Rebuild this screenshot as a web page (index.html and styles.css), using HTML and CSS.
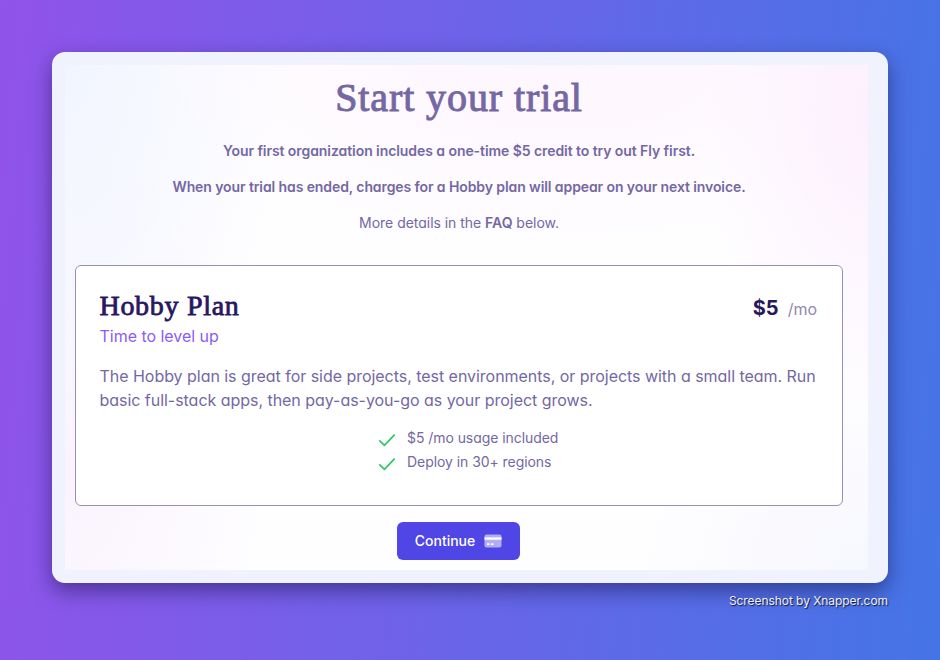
FILE: index.html
```html
<!DOCTYPE html>
<html lang="en">
<head>
<meta charset="utf-8">
<title>Start your trial</title>
<link rel="stylesheet" href="styles.css">
</head>
<body>
<main class="window">
  <div class="panel">
    <header class="intro">
      <h1 class="title">Start your trial</h1>
      <p class="strong credit">Your first organization includes a one-time $5 credit to try out Fly first.</p>
      <p class="strong charges">When your trial has ended, charges for a Hobby plan will appear on your next invoice.</p>
      <p class="details">More details in the <b>FAQ</b> below.</p>
    </header>
    <section class="plan">
      <div class="plan-head">
        <h2 class="plan-name">Hobby Plan</h2>
        <div class="price"><b>$5</b><span>/mo</span></div>
      </div>
      <p class="tagline">Time to level up</p>
      <p class="description">The Hobby plan is great for side projects, test environments, or projects with a small team. Run basic full-stack apps, then pay-as-you-go as your project grows.</p>
      <ul class="features">
        <li><svg class="check" viewBox="0 0 18 18"><path d="M1.8 9.8 6.4 14.4 16.2 4.2"/></svg><span>$5 /mo usage included</span></li>
        <li><svg class="check" viewBox="0 0 18 18"><path d="M1.8 9.8 6.4 14.4 16.2 4.2"/></svg><span>Deploy in 30+ regions</span></li>
      </ul>
    </section>
    <button class="continue" type="button">Continue
      <svg class="card-icon" viewBox="0 0 18 14"><rect x=".5" y=".5" width="17" height="13" rx="2" fill="#b3adf5"/><path fill="#fff" d="M.5 3.4h17v2.3H.5z"/><path fill="#fff" d="M3 9.2h2.5v1.8H3zM7 9.2h2.5v1.8H7z"/></svg>
    </button>
  </div>
</main>
<footer class="credit-line">Screenshot by Xnapper.com</footer>
</body>
</html>
```
FILE: styles.css
```css
* { box-sizing: border-box; }
body {
  margin: 0;
  width: 940px;
  height: 660px;
  padding: 52px 52px 0;
  overflow: hidden;
  background: linear-gradient(95deg, #9153ea 0%, #4475e6 100%);
  font-family: Inter, "Liberation Sans", sans-serif;
  font-feature-settings: "cv11";
  color: #7468a4;
}
h1, h2, p, ul { margin: 0; padding: 0; }
.window {
  height: 531px;
  padding: 13px 20px 13px 13px;
  border-radius: 13px;
  background: #f0f3fe;
  box-shadow: 0 8px 20px rgba(20, 15, 70, .5);
}
.panel {
  display: flex;
  flex-direction: column;
  align-items: center;
  height: 505px;
  padding: 13px 25px 0 10px;
  background:
    radial-gradient(ellipse 160px 300px at 100% 10%, #fdf0fe 0%, rgba(253, 240, 254, 0) 100%),
    radial-gradient(ellipse 420px 180px at 62% 0, #fef6fe 0%, rgba(254, 246, 254, 0) 100%),
    radial-gradient(ellipse 220px 400px at 0 0, #f1f5ff 0%, rgba(241, 245, 255, 0) 100%),
    radial-gradient(ellipse 200px 330px at 0 80%, #faf3fe 0%, rgba(250, 243, 254, 0) 100%),
    radial-gradient(ellipse 230px 200px at 100% 100%, #f7f8fe 0%, rgba(247, 248, 254, 0) 100%),
    #fefdff;
}
.intro {
  height: 187px;
  text-align: center;
  font-size: 14px;
  line-height: 20px;
}
.title {
  margin-bottom: 23px;
  font: 400 40px/40px "Liberation Serif", serif;
  letter-spacing: .9px;
  -webkit-text-stroke: 1px currentColor;
}
.intro p { margin-bottom: 16px; white-space: nowrap; letter-spacing: -.03px; }
.intro .credit { letter-spacing: -.07px; }
.intro .charges { letter-spacing: -.095px; }
.strong, .intro b { font-weight: 600; }
.plan {
  width: 768px;
  height: 241px;
  padding: 24px 24px 24px 23.5px;
  border: 1px solid #9690b9;
  border-radius: 6px;
  background: #fff;
}
.plan-head { display: flex; justify-content: space-between; height: 34px; }
.plan-name {
  color: #28175f;
  font: 400 28px/32px "Liberation Serif", serif;
  letter-spacing: .7px;
  -webkit-text-stroke: .8px currentColor;
}
.price { display: flex; align-items: baseline; gap: 9px; line-height: 36px; margin-right: 1px; }
.price b { color: #28175f; font-size: 20px; }
.price span { color: #9187b2; font-size: 16px; }
.tagline { color: #8b5cf6; font-size: 16px; line-height: 24px; letter-spacing: -.03px; }
.description { margin: 16px -6px 0 0; font-size: 16px; line-height: 24px; letter-spacing: -.035px; }
.features {
  width: 180px;
  margin: 14px auto 0 278.5px;
  list-style: none;
  font-size: 14px;
  line-height: 24px;
  letter-spacing: -.06px;
}
.features li { display: flex; gap: 11px; white-space: nowrap; }
.check {
  flex: none;
  width: 18px;
  height: 18px;
  margin-top: 5px;
  fill: none;
  stroke: #2dc765;
  stroke-width: 1.7;
  stroke-linecap: round;
  stroke-linejoin: round;
}
.continue {
  display: flex;
  align-items: center;
  justify-content: center;
  gap: 9px;
  width: 123px;
  height: 38px;
  margin: 16px 1px 0 0;
  border: 0;
  border-radius: 6px;
  padding: 0;
  background: #4f46e5;
  color: #fff;
  font: 500 14px/20px Inter, sans-serif;
}
.card-icon { width: 18px; height: 14px; }
.credit-line {
  margin-top: 10px;
  text-align: right;
  color: #eeeefa;
  font-size: 12px;
  font-feature-settings: normal;
  line-height: 16px;
  letter-spacing: -.06px;
  text-shadow: 1px 1px 1px #111632;
}
```
